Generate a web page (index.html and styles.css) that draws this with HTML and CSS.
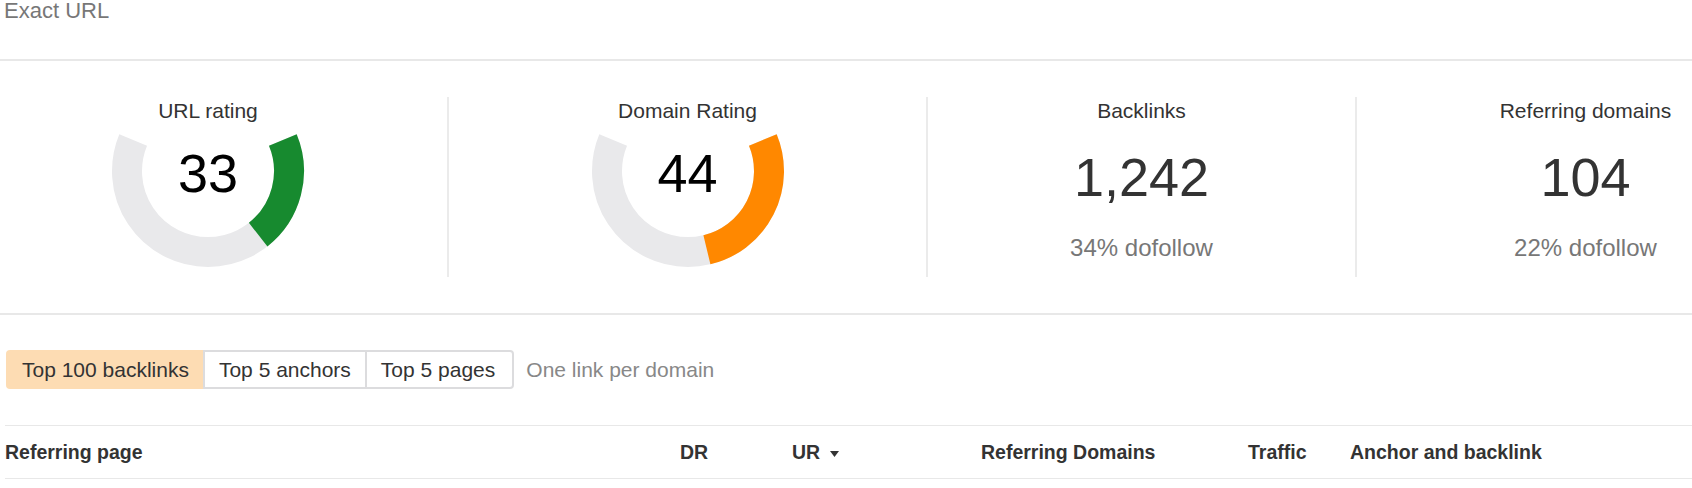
FILE: index.html
```html
<!DOCTYPE html>
<html lang="en">
<head>
    <meta charset="UTF-8">
    <title>Backlink profile - Exact URL</title>
    <link rel="stylesheet" href="styles.css">
</head>
<body>

<div class="title">Exact URL</div>

<div class="metrics">
    <div class="metric metric-first">
        <div class="metric-label">URL rating</div>
        <div class="gauge">
            <svg width="200" height="146" viewBox="0 0 200 146">
                <path class="gauge-track" d="M 174.83 17 A 81 81 0 1 1 25.17 17"/>
                <path class="gauge-fill green" d="M 174.83 17 A 81 81 0 0 1 150.15 111.61"/>
            </svg>
            <div class="gauge-value">33</div>
        </div>
    </div>
    <div class="metric">
        <div class="metric-label">Domain Rating</div>
        <div class="gauge">
            <svg width="200" height="146" viewBox="0 0 200 146">
                <path class="gauge-track" d="M 174.83 17 A 81 81 0 1 1 25.17 17"/>
                <path class="gauge-fill orange" d="M 174.83 17 A 81 81 0 0 1 118.91 126.76"/>
            </svg>
            <div class="gauge-value">44</div>
        </div>
    </div>
    <div class="metric">
        <div class="metric-label">Backlinks</div>
        <div class="metric-value">1,242</div>
        <div class="metric-sub">34% dofollow</div>
    </div>
    <div class="metric metric-last">
        <div class="metric-label">Referring domains</div>
        <div class="metric-value">104</div>
        <div class="metric-sub">22% dofollow</div>
    </div>
</div>

<div class="toolbar">
    <div class="tabs">
        <div class="tab active">Top 100 backlinks</div>
        <div class="tab">Top 5 anchors</div>
        <div class="tab">Top 5 pages</div>
    </div>
    <span class="toolbar-note">One link per domain</span>
</div>

<div class="table-head">
    <div>Referring page</div>
    <div>DR</div>
    <div>UR<svg class="sort-arrow" width="9" height="6" viewBox="0 0 9 6"><path d="M0 0 H9 L4.5 6 Z"/></svg></div>
    <div>Referring Domains</div>
    <div>Traffic</div>
    <div>Anchor and backlink</div>
</div>

</body>
</html>
```

FILE: styles.css
```css
html, body {
    margin: 0;
    padding: 0;
    overflow: hidden;
    background-color: #fff;
    font-family: "Liberation Sans", Arial, sans-serif;
    color: #333;
}
.title {
    font-size: 22px;
    line-height: 22px;
    color: #777;
    padding: 0 0 37px 4px;
    border-bottom: 2px solid #e8e8e8;
}
.metrics {
    display: grid;
    grid-template-columns: 447px 479px 429px 1fr;
    padding: 36px 0;
    border-bottom: 2px solid #e8e8e8;
}
.metric {
    height: 180px;
    box-sizing: border-box;
    padding-top: 2px;
    display: flex;
    flex-direction: column;
    align-items: center;
    border-left: 2px solid #ebebeb;
}
.metric-first {
    border-left: none;
    padding-right: 31px;
}
.metric-last {
    padding-left: 122px;
}
.metric-label {
    font-size: 21px;
    line-height: 24px;
    color: #333;
    white-space: nowrap;
}
.gauge {
    display: grid;
    justify-items: center;
}
.gauge > * {
    grid-area: 1 / 1;
}
.gauge-track, .gauge-fill {
    fill: none;
    stroke-width: 30;
}
.gauge-track {
    stroke: #e9e9eb;
}
.gauge-fill.green {
    stroke: #178a2f;
}
.gauge-fill.orange {
    stroke: #ff8800;
}
.gauge-value {
    margin-top: 20px;
    font-size: 54px;
    line-height: 60px;
    color: #000;
}
.metric-value {
    margin-top: 24px;
    font-size: 54px;
    line-height: 60px;
    color: #333;
}
.metric-sub {
    margin-top: 27px;
    font-size: 24px;
    line-height: 28px;
    color: #777;
    white-space: nowrap;
}
.toolbar {
    display: flex;
    align-items: center;
    margin: 35px 0 0 6px;
}
.tabs {
    display: flex;
}
.tab {
    height: 39px;
    box-sizing: border-box;
    display: flex;
    align-items: center;
    padding: 0 14px;
    font-size: 21px;
    line-height: 24px;
    color: #333;
    border: 2px solid #dcdcde;
    border-right-width: 0;
    background-color: #fff;
}
.tab:first-child {
    border-radius: 4px 0 0 4px;
}
.tab:last-child {
    padding-right: 17px;
    border-right-width: 2px;
    border-radius: 0 4px 4px 0;
}
.tab.active {
    background-color: #fddcb3;
    border-color: #fddcb3;
}
.toolbar-note {
    margin-left: 12px;
    font-size: 21px;
    color: #888;
}
.table-head {
    display: grid;
    grid-template-columns: 675px 112px 189px 267px 102px 1fr;
    margin: 36px 0 0 5px;
    padding: 14px 0;
    border-top: 1px solid #e8e8e8;
    border-bottom: 1px solid #e8e8e8;
    font-size: 19.5px;
    line-height: 24px;
    font-weight: bold;
    color: #333;
}
.sort-arrow {
    margin-left: 10px;
    vertical-align: middle;
    fill: #333;
}
```
